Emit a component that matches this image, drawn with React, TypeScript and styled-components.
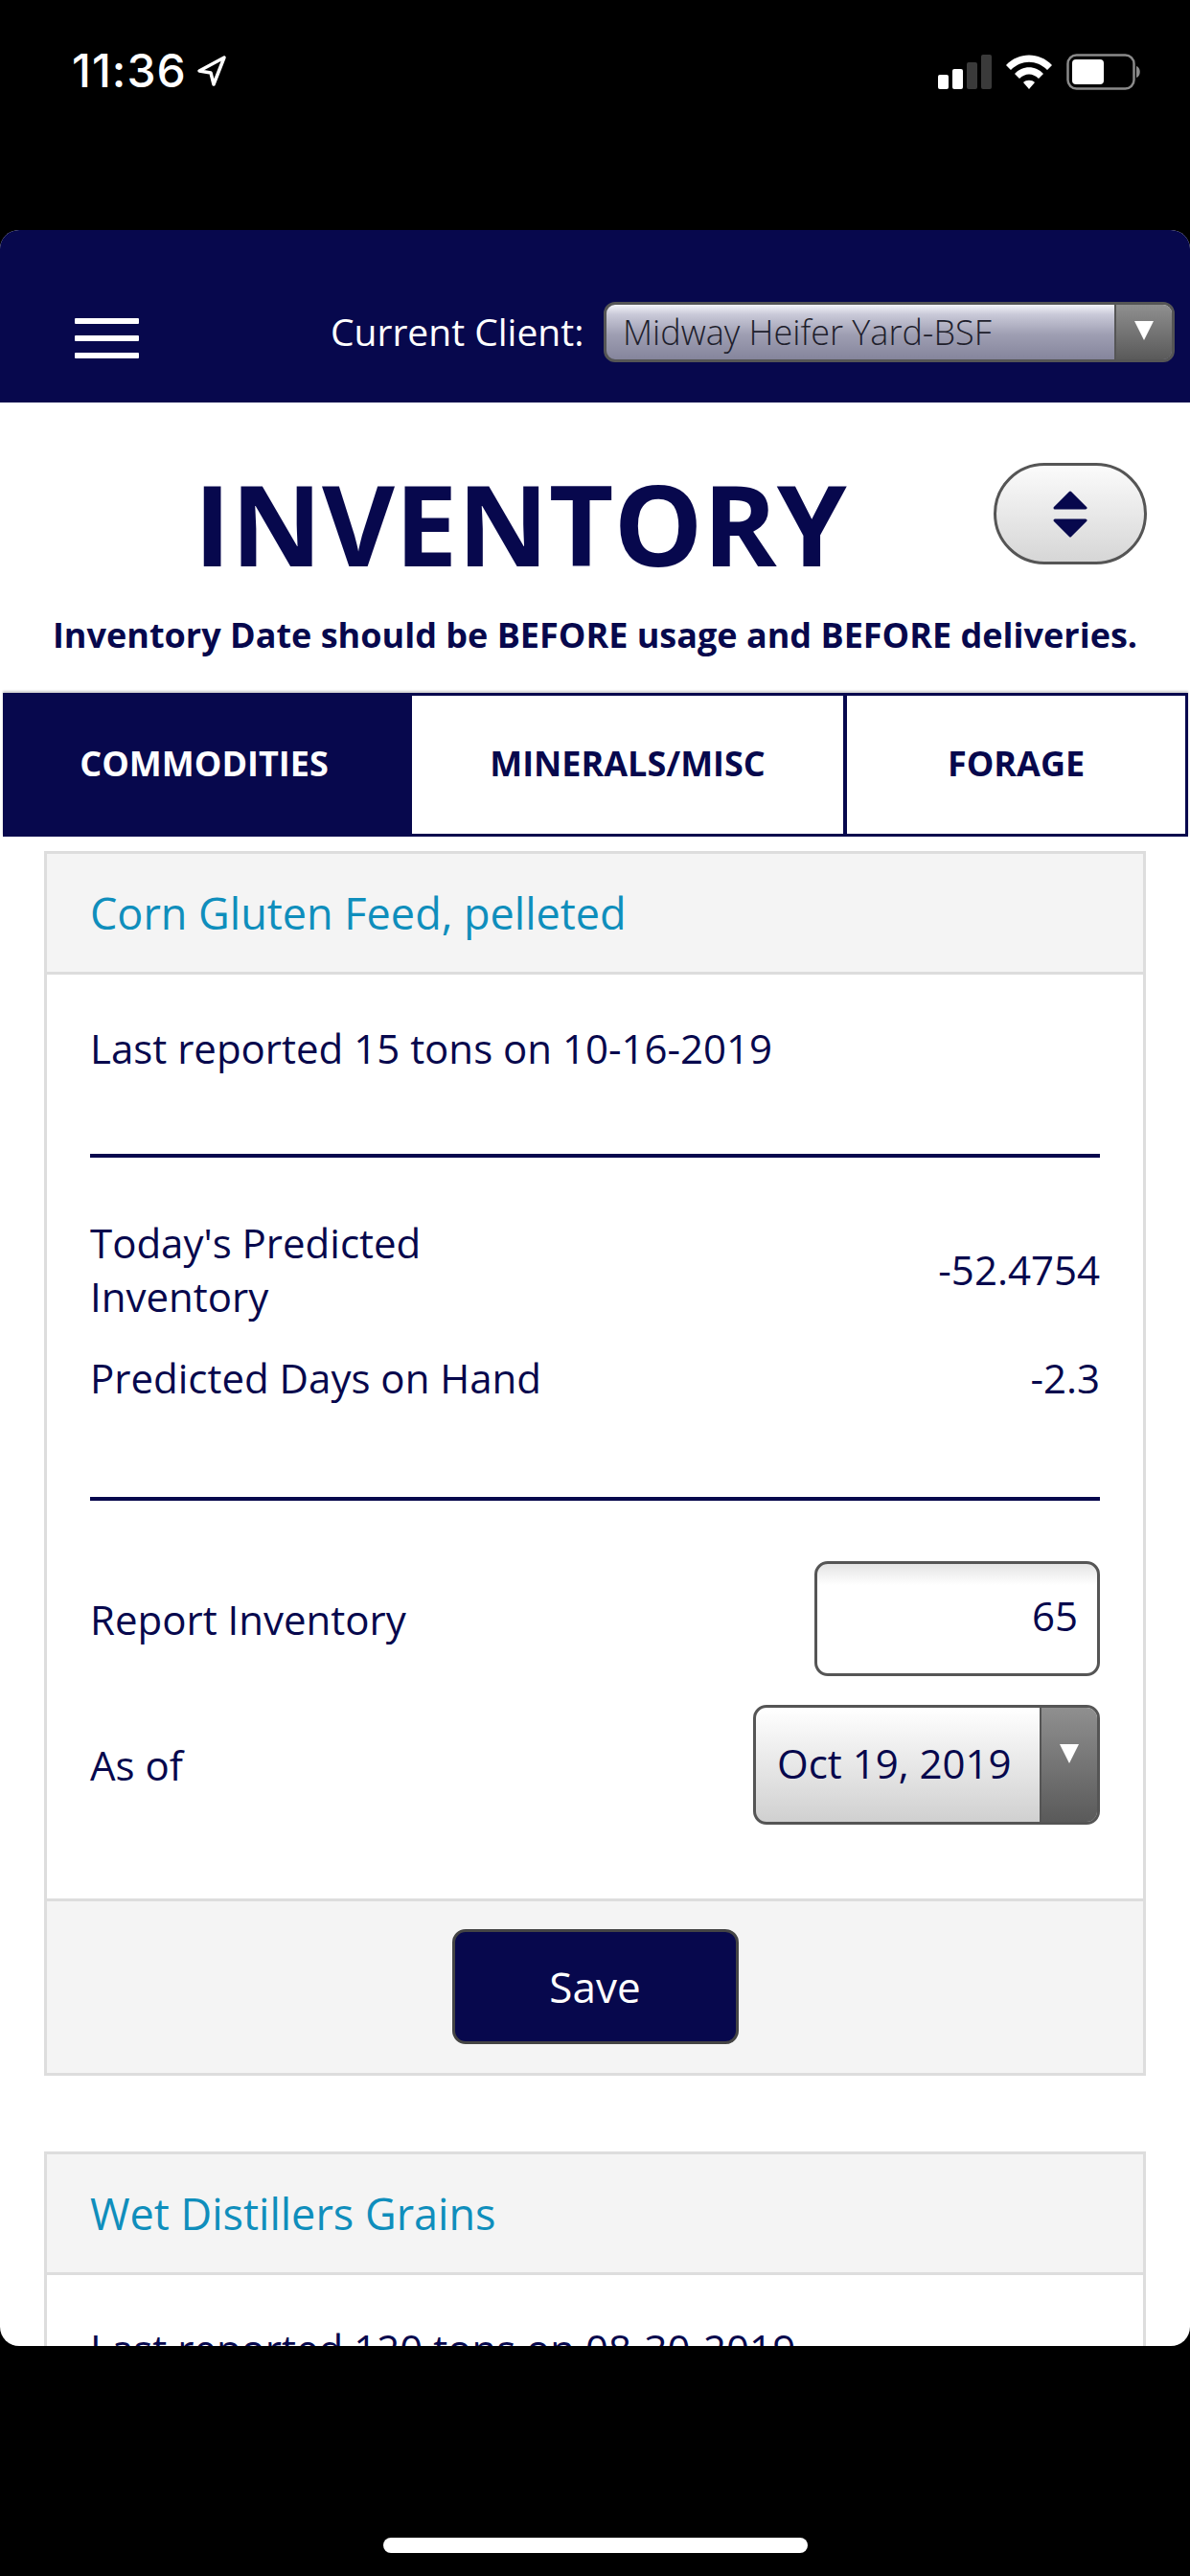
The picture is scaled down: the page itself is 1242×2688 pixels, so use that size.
import React from 'react';
import styled, { createGlobalStyle } from 'styled-components';

const NAVY = '#07084d';
const Global = createGlobalStyle`
  html, body { margin: 0; padding: 0; background: #000; }
  * { box-sizing: border-box; }
  body { font-family: "Open Sans", sans-serif; }
`;
const Device = styled.div`
  width: 1242px; height: 2688px; background: #000; display: flex; flex-direction: column; overflow: hidden;
`;
const StatusBar = styled.div`
  height: 240px; flex: none; display: flex; justify-content: space-between; align-items: flex-start; padding: 48px 51px 0 75px; color: #fff;
`;
const Clock = styled.div`
  display: flex; align-items: center; gap: 10px; font: 500 48px/52px Inter, sans-serif; letter-spacing: 1px;
`;
const StatusIcons = styled.div`
  display: flex; align-items: center; gap: 15px; margin-top: 8px;
`;
const Screen = styled.div`
  height: 2208px; flex: none; background: #fff; border-radius: 20px; overflow: hidden; display: flex; flex-direction: column;
`;
const Header = styled.header`
  height: 180px; flex: none; background: ${NAVY}; display: flex; align-items: flex-start; padding: 75px 16px 0 78px;
`;
const Burger = styled.button`
  width: 67px; height: 42px; margin-top: 17px; padding: 0; border: 0; background: none; display: flex; flex-direction: column; justify-content: space-between;
  span { display: block; height: 6px; border-radius: 1px; background: #fff; }
`;
const ClientLabel = styled.span`
  margin-left: 200px; color: #fff; font-size: 39px; line-height: 62px; white-space: nowrap; width: 285px; flex: none;
`;
const ClientSelect = styled.div`
  width: 596px; height: 63px; flex: none; border: 3px solid #555; border-radius: 12px; overflow: hidden; display: flex;
  background: linear-gradient(#f4f4f8 0%, #c9c9d8 18%, #9e9eb2 55%, #85859c 100%);
`;
const ClientValue = styled.span`
  flex: 1; padding-left: 17px; font-size: 36px; font-weight: 300; line-height: 57px; color: #1e1e2c; white-space: nowrap;
`;
const ArrowBox = styled.div<{ $w: number }>`
  width: ${p => p.$w}px; flex: none; display: flex; justify-content: center; align-items: flex-start; border-left: 2px solid #555;
  background: linear-gradient(#8f8f8f, #5a5a5a);
`;
const Down = styled.div<{ $top: number }>`
  margin-top: ${p => p.$top}px; width: 0; height: 0;
  border-left: 10px solid transparent; border-right: 10px solid transparent; border-top: 20px solid #fff;
`;
const TitleRow = styled.div`
  height: 221px; flex: none; display: flex; position: relative; justify-content: center; padding-top: 51px;
`;
const Title = styled.h1`
  margin: 0 0 0 -156px; color: ${NAVY}; font-size: 117px; line-height: 150px; font-weight: 700; letter-spacing: 0;
`;
const Toggle = styled.button`
  position: absolute; left: 1037px; top: 63px; width: 160px; height: 106px; padding: 0; border: 3px solid #555; border-radius: 53px;
  background: linear-gradient(#fbfbfb, #d6d6d6); display: flex; align-items: center; justify-content: center;
`;
const Note = styled.p`
  margin: 0; height: 82px; flex: none; text-align: center; color: ${NAVY}; font-size: 36px; line-height: 44px; font-weight: 700; white-space: nowrap;
`;
const Tabs = styled.nav`
  height: 150px; flex: none; margin: 0 2px 0 3px; display: flex; border: 3px solid ${NAVY}; box-shadow: 0 -2px 2px rgba(0,0,0,.2);
`;
const Tab = styled.div<{ $active?: boolean; $w: number }>`
  width: ${p => p.$w}px; flex: none; display: flex; align-items: center; justify-content: center; padding-bottom: 4px;
  padding-right: ${p => (p.$active ? 6 : 0)}px;
  font-size: 36px; font-weight: 700; text-transform: uppercase;
  background: ${p => (p.$active ? NAVY : '#fff')}; color: ${p => (p.$active ? '#fff' : NAVY)};
  & + & { border-left: 4px solid ${NAVY}; }
`;
const Content = styled.main`
  padding: 15px 46px 0; display: flex; flex-direction: column; gap: 79px;
`;
const Card = styled.section`
  width: 1150px; flex: none; border: 3px solid #ddd; background: #fff;
`;
const CardTitle = styled.div`
  height: 126px; padding-left: 45px; display: flex; align-items: center; background: #f4f4f4; border-bottom: 3px solid #ddd;
  color: #0f8ebc; font-size: 45px; line-height: 56px;
`;
const CardBody = styled.div`
  padding: 49px 45px 0; color: ${NAVY}; font-size: 42px;
`;
const LastReported = styled.div`
  line-height: 56px; height: 138px;
`;
const Rule = styled.hr`
  margin: 0; border: 0; height: 4px; background: ${NAVY};
`;
const Stats = styled.div`
  height: 354px; padding-top: 61px; display: flex; flex-direction: column; gap: 29px;
`;
const StatRow = styled.div`
  display: flex; justify-content: space-between; align-items: center; line-height: 56px;
`;
const StatLabel = styled.span`
  width: 420px;
`;
const FormGroup = styled.div`
  padding: 63px 0 77px; display: flex; flex-direction: column; gap: 30px;
`;
const FormRow = styled.div`
  display: flex; justify-content: space-between; align-items: center;
`;
const NumberBox = styled.div`
  width: 298px; height: 120px; border: 3px solid #555; border-radius: 14px; padding: 0 20px; text-align: right; line-height: 108px;
  background: linear-gradient(#e4e4e4 0, #fff 22px);
`;
const DateSelect = styled.div`
  width: 362px; height: 125px; border: 3px solid #555; border-radius: 14px; overflow: hidden; display: flex;
  background: linear-gradient(#fff, #d0d0d0);
`;
const DateValue = styled.span`
  flex: 1; padding-left: 22px; line-height: 116px; white-space: nowrap;
`;
const Footer = styled.div`
  height: 182px; display: flex; justify-content: center; padding-top: 29px; background: #f4f4f4; border-top: 3px solid #ddd;
`;
const SaveButton = styled.button`
  width: 299px; height: 120px; border: 3px solid #444; border-radius: 14px; background: ${NAVY}; color: #fff; font: 400 44px "Open Sans", sans-serif;
`;
const HomeBar = styled.div`
  width: 443px; height: 16px; flex: none; margin: 200px auto 0; border-radius: 8px; background: #fff;
`;

const Signal = () => (
  <svg width="56" height="36" viewBox="0 0 56 36">
    <rect x="0" y="21" width="11" height="15" rx="2" fill="#fff" />
    <rect x="15" y="15" width="11" height="21" rx="2" fill="#fff" />
    <rect x="30" y="8" width="11" height="28" rx="2" fill="#3a3a3a" />
    <rect x="45" y="0" width="11" height="36" rx="2" fill="#3a3a3a" />
  </svg>
);
const Wifi = () => (
  <svg width="48" height="36" viewBox="0 0 48 36" fill="#fff">
    <path d="M0 11 C13 -3 35 -3 48 11 L43 16 C32 5 16 5 5 16Z" />
    <path d="M9 20 C17 11 31 11 39 20 L34 25 C28 19 20 19 14 25Z" />
    <path d="M18 29 C21 26 27 26 30 29 L24 36Z" />
  </svg>
);
const Battery = () => (
  <svg width="78" height="38" viewBox="0 0 78 38">
    <rect x="1.5" y="1.5" width="69" height="35" rx="9" fill="none" stroke="#8a8a8a" strokeWidth="2.5" />
    <rect x="6" y="6" width="33" height="26" rx="4" fill="#fff" />
    <path d="M73 13 C78 14 78 24 73 25Z" fill="#8a8a8a" />
  </svg>
);
const Location = () => (
  <svg width="32" height="34" viewBox="0 0 32 34" fill="none" stroke="#fff" strokeWidth="3.5" strokeLinejoin="round">
    <path d="M29 3 L3 17 L15 19 L18 31Z" />
  </svg>
);
const Sort = () => (
  <svg width="36" height="49" viewBox="0 0 36 49" fill={NAVY} stroke={NAVY} strokeWidth="3" strokeLinejoin="round">
    <path d="M18 2 L34 18 H2Z" />
    <path d="M18 47 L34 31 H2Z" />
  </svg>
);

export default function App() {
  return (
    <Device>
      <Global />
      <StatusBar>
        <Clock>11:36 <Location /></Clock>
        <StatusIcons><Signal /><Wifi /><Battery /></StatusIcons>
      </StatusBar>
      <Screen>
        <Header>
          <Burger aria-label="Menu"><span /><span /><span /></Burger>
          <ClientLabel>Current Client:</ClientLabel>
          <ClientSelect>
            <ClientValue>Midway Heifer Yard-BSF</ClientValue>
            <ArrowBox $w={60}><Down $top={17} /></ArrowBox>
          </ClientSelect>
        </Header>
        <TitleRow>
          <Title>INVENTORY</Title>
          <Toggle aria-label="Toggle"><Sort /></Toggle>
        </TitleRow>
        <Note>Inventory Date should be BEFORE usage and BEFORE deliveries.</Note>
        <Tabs>
          <Tab $active $w={420}>Commodities</Tab>
          <Tab $w={454}>Minerals/Misc</Tab>
          <Tab $w={357}>Forage</Tab>
        </Tabs>
        <Content>
          <Card>
            <CardTitle>Corn Gluten Feed, pelleted</CardTitle>
            <CardBody>
              <LastReported>Last reported 15 tons on 10-16-2019</LastReported>
              <Rule />
              <Stats>
                <StatRow><StatLabel>Today's Predicted Inventory</StatLabel><span>-52.4754</span></StatRow>
                <StatRow><span>Predicted Days on Hand</span><span>-2.3</span></StatRow>
              </Stats>
              <Rule />
              <FormGroup>
                <FormRow>
                  <span>Report Inventory</span>
                  <NumberBox>65</NumberBox>
                </FormRow>
                <FormRow>
                  <span>As of</span>
                  <DateSelect>
                    <DateValue>Oct 19, 2019</DateValue>
                    <ArrowBox $w={60}><Down $top={38} /></ArrowBox>
                  </DateSelect>
                </FormRow>
              </FormGroup>
            </CardBody>
            <Footer><SaveButton>Save</SaveButton></Footer>
          </Card>
          <Card>
            <CardTitle>Wet Distillers Grains</CardTitle>
            <CardBody>
              <LastReported>Last reported 120 tons on 08-30-2019</LastReported>
            </CardBody>
          </Card>
        </Content>
      </Screen>
      <HomeBar />
    </Device>
  );
}
